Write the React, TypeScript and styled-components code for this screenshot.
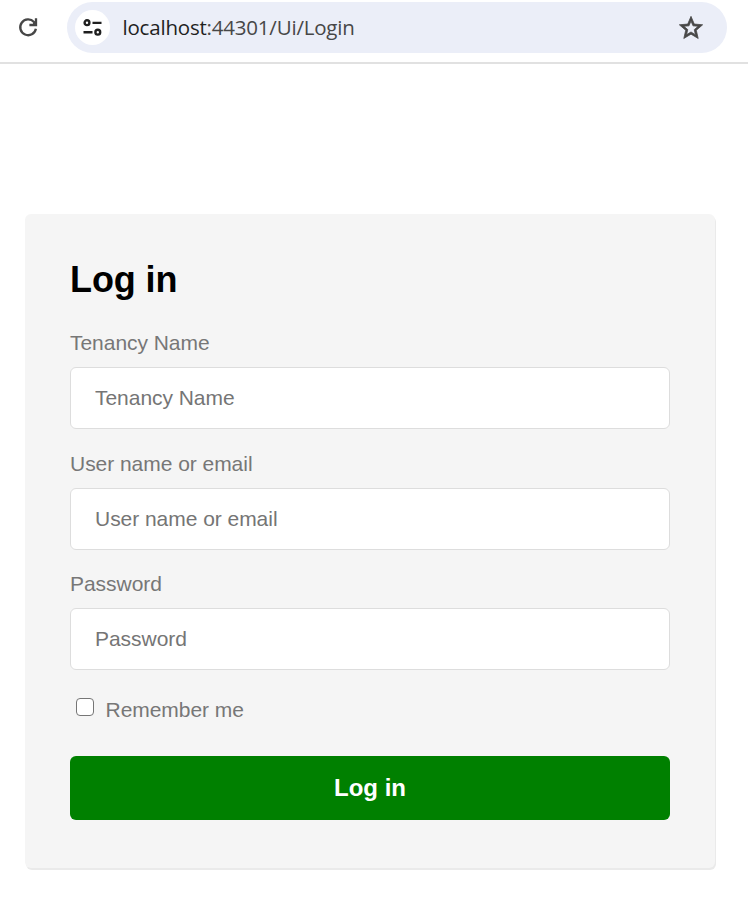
import React from 'react';
import styled, { createGlobalStyle } from 'styled-components';

const GlobalStyle = createGlobalStyle`
  * { box-sizing: border-box; }
  body { margin: 0; background: #fff; font-family: "Liberation Sans", Arial, sans-serif; }
`;

const Page = styled.div`
  min-height: 100vh;
  background: #fff;
`;

const Toolbar = styled.header`
  display: flex;
  height: 64px;
  padding: 2px 21px 0 16px;
  border-bottom: 2px solid #e1e1e1;
`;

const ReloadButton = styled.button`
  width: 24px;
  height: 51px;
  margin-right: 27px;
  padding: 0;
  border: 0;
  background: none;
  svg { display: block; }
`;

const AddressBar = styled.div`
  flex: 1;
  display: flex;
  align-items: center;
  height: 51px;
  padding: 0 22px 0 8px;
  border-radius: 26px;
  background: #ebeef8;
`;

const SiteInfo = styled.span`
  display: flex;
  width: 35px;
  height: 35px;
  border-radius: 50%;
  background: #fff;
`;

const Url = styled.span`
  flex: 1;
  margin: 0 0 2px 12.5px;
  color: #474747;
  font: 20.5px/28px "Open Sans", "Noto Sans", sans-serif;
  letter-spacing: -0.2px;
  white-space: nowrap;
`;

const Host = styled.span`
  color: #1f1f1f;
`;

const Card = styled.form`
  width: 690px;
  height: 654px;
  margin: 150px 0 0 25px;
  padding: 46px 45px 0;
  border-radius: 6px;
  background: #f5f5f5;
  box-shadow: 1px 2px 0 #eaeaea;
`;

const Title = styled.h1`
  margin: 0 0 28px;
  color: #000;
  font-size: 36px;
  line-height: 40px;
  letter-spacing: -0.1px;
`;

const Field = styled.label`
  display: block;
  height: 120.5px;
  color: #777;
  font-size: 21px;
  line-height: 30px;
  letter-spacing: -0.04px;
`;

const Input = styled.input`
  display: block;
  width: 100%;
  height: 62px;
  margin-top: 9px;
  padding: 0 24px;
  border: 1px solid #ddd;
  border-radius: 6px;
  background: #fff;
  font: 21px "Liberation Sans", Arial, sans-serif;
  letter-spacing: -0.04px;
  &::placeholder { color: #757575; opacity: 1; }
`;

const Remember = styled.label`
  display: flex;
  height: 30px;
  margin-top: 5px;
  padding-left: 6px;
  color: #777;
  font-size: 21px;
  line-height: 30px;
  letter-spacing: -0.04px;
`;

const Checkbox = styled.input`
  appearance: none;
  width: 18px;
  height: 18px;
  margin: 3px 11.5px 0 0;
  border: 1.5px solid #767676;
  border-radius: 4px;
  background: #fff;
`;

const Submit = styled.button`
  display: block;
  width: 100%;
  height: 64px;
  margin-top: 31px;
  padding: 0;
  border: 0;
  border-radius: 6px;
  background: #008000;
  color: #fff;
  font: bold 24px "Liberation Sans", Arial, sans-serif;
`;

const fields = [
  { label: 'Tenancy Name', type: 'text' },
  { label: 'User name or email', type: 'text' },
  { label: 'Password', type: 'password' },
];

export default function App() {
  return (
    <Page>
      <GlobalStyle />
      <Toolbar>
        <ReloadButton aria-label="Reload">
          <svg width="24" height="51" viewBox="0 0 24 51" fill="none" stroke="#474747" strokeWidth="2.3">
            <path d="M19.9 26.8A7.9 7.9 0 1 1 18 20L19.5 21.8" />
            <path d="M13.4 23H20V16.2" />
            <path d="M16.4 22.6L19.6 19.4V22.6Z" fill="#474747" strokeWidth="1" />
          </svg>
        </ReloadButton>
        <AddressBar>
          <SiteInfo>
            <svg width="35" height="35" viewBox="0 0 35 35" fill="none" stroke="#1f1f1f" strokeWidth="2.4">
              <circle cx="12" cy="12.7" r="2.4" />
              <path d="M17.5 12.9H26.5M8.5 22.2H17.5" />
              <circle cx="22.8" cy="22.2" r="2.4" />
            </svg>
          </SiteInfo>
          <Url><Host>localhost</Host>:44301/Ui/Login</Url>
          <svg width="28" height="28" viewBox="0 0 24 24" fill="#474747" stroke="#474747" strokeWidth="0.65">
            <path d="M22 9.24l-7.19-.62L12 2 9.19 8.63 2 9.24l5.46 4.73L5.82 21 12 17.27 18.18 21l-1.63-7.03L22 9.24zM12 15.4l-3.76 2.27 1-4.28-3.32-2.88 4.38-.38L12 6.1l1.71 4.04 4.38.38-3.32 2.88 1 4.28L12 15.4z" />
          </svg>
        </AddressBar>
      </Toolbar>
      <Card>
        <Title>Log in</Title>
        {fields.map((f) => (
          <Field key={f.label}>
            {f.label}
            <Input type={f.type} placeholder={f.label} />
          </Field>
        ))}
        <Remember>
          <Checkbox type="checkbox" />
          Remember me
        </Remember>
        <Submit type="button">Log in</Submit>
      </Card>
    </Page>
  );
}
